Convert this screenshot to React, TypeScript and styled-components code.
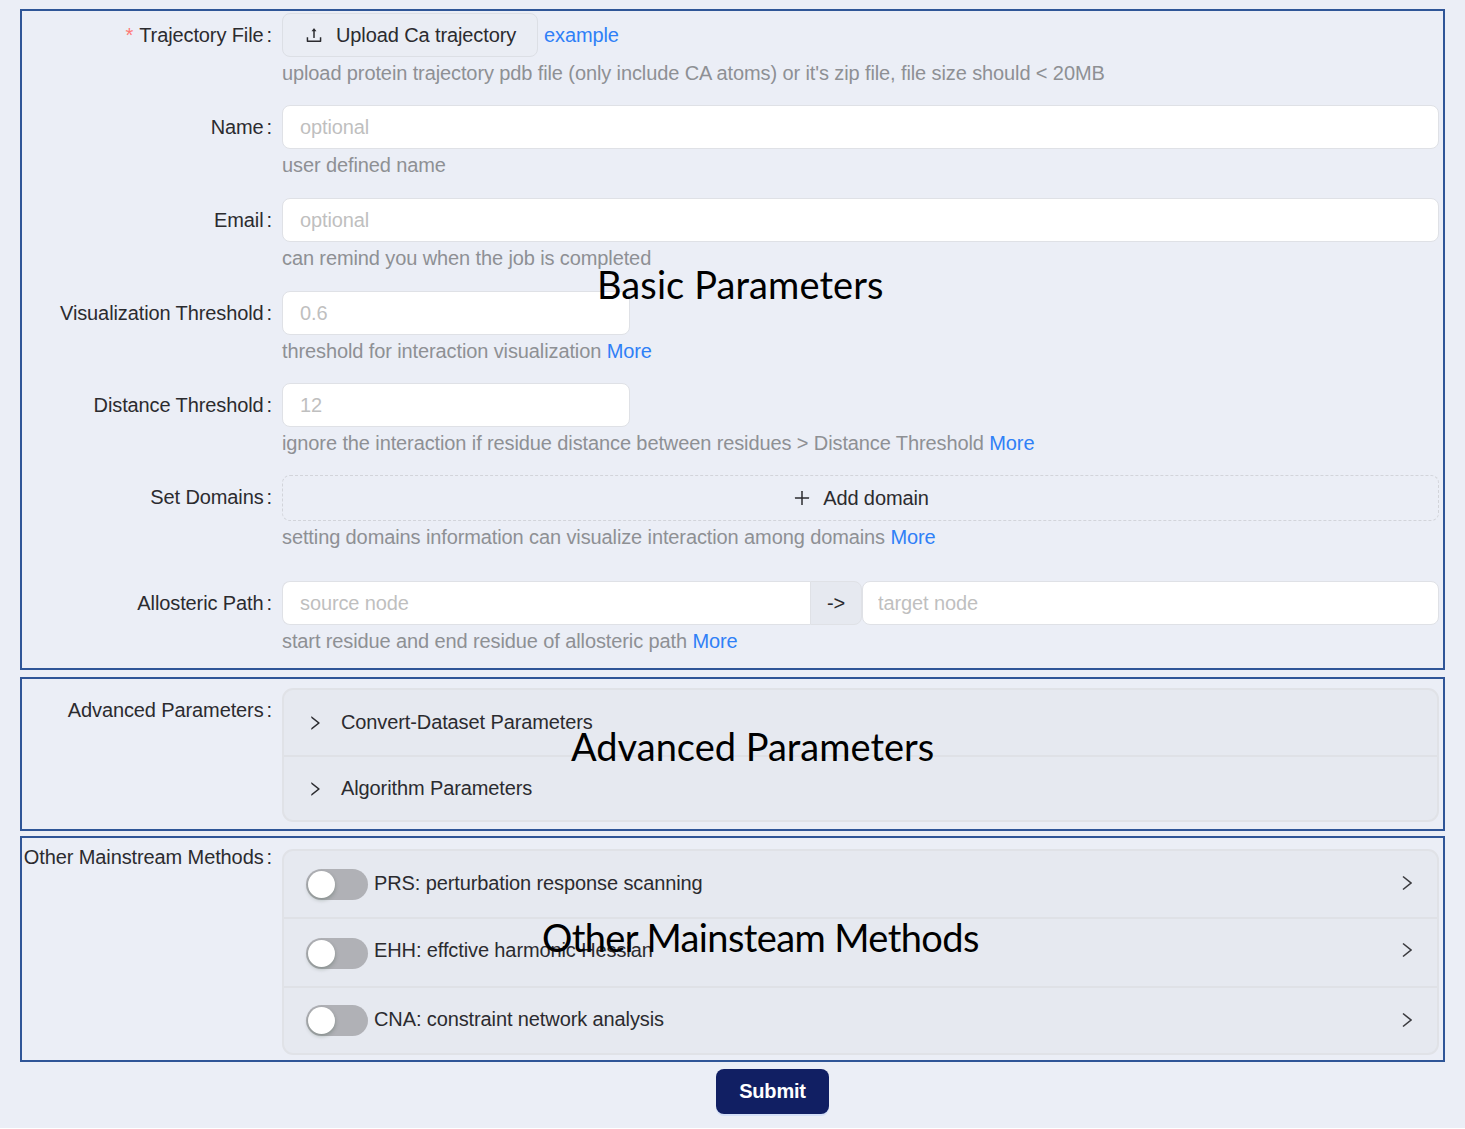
import React from 'react';
import styled, { createGlobalStyle } from 'styled-components';
import { AiOutlinePlus, AiOutlineRight, AiOutlineUpload } from 'react-icons/ai';

const GlobalStyle = createGlobalStyle`
  html, body {
    margin: 0;
    padding: 0;
    background: #ffffff;
  }
  body {
    font-family: "Liberation Sans", Arial, sans-serif;
  }
`;

const METHODS = [
  { name: 'PRS: perturbation response scanning', height: 66, lift: 0, drop: 0 },
  { name: 'EHH: effctive harmonic Hessian', height: 69, lift: 3, drop: 4 },
  { name: 'CNA: constraint network analysis', height: 67, lift: 0, drop: 0 },
];

const PanelArrow = () => (
  <svg width="10" height="16" viewBox="0 0 10 16" fill="none" stroke="#3a3a3e" strokeWidth="1.6">
    <path d="M1 1.5 9 8 1 14.5" />
  </svg>
);

const App = () => (
  <Page>
    <GlobalStyle />
    <Section $height={661}>
      <Row $height={94} $top={2}>
        <Label $required>Trajectory File</Label>
        <Control>
          <UploadLine>
            <UploadButton>
              <AiOutlineUpload size={20} />
              Upload Ca trajectory
            </UploadButton>
            <Link>example</Link>
          </UploadLine>
          <Extra>upload protein trajectory pdb file (only include CA atoms) or it's zip file, file size should &lt; 20MB</Extra>
        </Control>
      </Row>
      <Row $height={93}>
        <Label>Name</Label>
        <Control>
          <Input placeholder="optional" />
          <Extra>user defined name</Extra>
        </Control>
      </Row>
      <Row $height={93}>
        <Label>Email</Label>
        <Control>
          <Input placeholder="optional" />
          <Extra>can remind you when the job is completed</Extra>
        </Control>
      </Row>
      <Row $height={92}>
        <Label>Visualization Threshold</Label>
        <Control>
          <Input $narrow placeholder="0.6" />
          <Extra>threshold for interaction visualization <Link>More</Link></Extra>
        </Control>
      </Row>
      <Row $height={92}>
        <Label>Distance Threshold</Label>
        <Control>
          <Input $narrow placeholder="12" />
          <Extra>ignore the interaction if residue distance between residues &gt; Distance Threshold <Link>More</Link></Extra>
        </Control>
      </Row>
      <Row $height={106}>
        <Label>Set Domains</Label>
        <Control>
          <DashedButton>
            <AiOutlinePlus size={20} />
            Add domain
          </DashedButton>
          <Extra>setting domains information can visualize interaction among domains <Link>More</Link></Extra>
        </Control>
      </Row>
      <Row>
        <Label>Allosteric Path</Label>
        <Control>
          <PathLine>
            <PathInput placeholder="source node" />
            <Addon>-&gt;</Addon>
            <TargetInput placeholder="target node" />
          </PathLine>
          <Extra>start residue and end residue of allosteric path <Link>More</Link></Extra>
        </Control>
      </Row>
      <Caption $left={575} $top={251} $spacing={0.1}>Basic Parameters</Caption>
    </Section>

    <Section $height={154} $gap={7}>
      <Row $top={9}>
        <Label>Advanced Parameters</Label>
        <Collapse>
          <Panel $height={65}>
            <AiOutlineRight size={18} />
            <PanelTitle $indent={17}>Convert-Dataset Parameters</PanelTitle>
          </Panel>
          <Panel $height={65}>
            <AiOutlineRight size={18} />
            <PanelTitle $indent={17}>Algorithm Parameters</PanelTitle>
          </Panel>
        </Collapse>
      </Row>
      <Caption $left={549} $top={45} $spacing={0}>Advanced Parameters</Caption>
    </Section>

    <Section $height={226} $gap={5}>
      <Row $top={11}>
        <Label $height={16}>Other Mainstream Methods</Label>
        <Collapse>
          {METHODS.map(m => (
            <Panel key={m.name} $height={m.height} $lift={m.lift}>
              <Switch $drop={m.drop} />
              <PanelTitle $indent={6} $raised>{m.name}</PanelTitle>
              <Arrow><PanelArrow /></Arrow>
            </Panel>
          ))}
        </Collapse>
      </Row>
      <Caption $left={520} $top={77} $spacing={-0.6}>Other Mainsteam Methods</Caption>
    </Section>

    <Footer>
      <SubmitButton>Submit</SubmitButton>
    </Footer>
  </Page>
);

const Page = styled.div`
  box-sizing: border-box;
  height: 1128px;
  padding: 9px 20px 0;
  background: #ebeef6;
  font-size: 20px;
  letter-spacing: -0.11px;
  color: #2b2b2f;
`;

const Section = styled.section<{ $height: number; $gap?: number }>`
  position: relative;
  box-sizing: border-box;
  height: ${p => p.$height}px;
  margin-top: ${p => p.$gap ?? 0}px;
  padding-right: 4px;
  border: 2px solid #2f5597;
`;

const Row = styled.div<{ $height?: number; $top?: number }>`
  display: grid;
  grid-template-columns: 260px 1fr;
  height: ${p => (p.$height ? `${p.$height}px` : 'auto')};
  padding-top: ${p => p.$top ?? 0}px;
  box-sizing: border-box;
`;

const Label = styled.label<{ $required?: boolean; $height?: number }>`
  height: ${p => p.$height ?? 44}px;
  line-height: ${p => p.$height ?? 44}px;
  padding-right: 10px;
  text-align: right;
  white-space: nowrap;

  &::before {
    content: ${p => (p.$required ? "'*'" : 'none')};
    margin-right: 6px;
    color: #ff7875;
  }

  &::after {
    content: ':';
    margin-left: 3px;
  }
`;

const Control = styled.div`
  min-width: 0;
`;

const UploadLine = styled.div`
  display: flex;
  align-items: center;
  gap: 6px;
  height: 44px;
`;

const UploadButton = styled.div`
  display: flex;
  align-items: center;
  gap: 12px;
  box-sizing: border-box;
  width: 256px;
  height: 44px;
  padding-left: 21px;
  background: #eaedf4;
  border: 1px solid #dcdfe5;
  border-radius: 8px;
  white-space: nowrap;
`;

const Link = styled.span`
  color: #2f80f7;
`;

const Extra = styled.div`
  height: 30px;
  margin-top: 1px;
  line-height: 30px;
  color: #8e9094;
`;

const Input = styled.input<{ $narrow?: boolean }>`
  display: block;
  box-sizing: border-box;
  width: ${p => (p.$narrow ? '348px' : '100%')};
  height: 44px;
  padding: 0 17px;
  background: #ffffff;
  border: 1px solid #dfe1e6;
  border-radius: 8px;
  outline: none;
  font: inherit;
  letter-spacing: inherit;

  &::placeholder {
    color: #bfbfbf;
    opacity: 1;
  }
`;

const DashedButton = styled.div`
  display: flex;
  align-items: center;
  justify-content: center;
  gap: 11px;
  box-sizing: border-box;
  height: 46px;
  border: 1px dashed #d2d4da;
  border-radius: 8px;
`;

const PathLine = styled.div`
  display: flex;
  height: 44px;
`;

const PathInput = styled(Input)`
  width: 528px;
  border-right: 0;
  border-radius: 8px 0 0 8px;
`;

const Addon = styled.div`
  display: flex;
  align-items: center;
  justify-content: center;
  box-sizing: border-box;
  width: 52px;
  background: #e6e9f0;
  border: 1px solid #dfe1e6;
  border-radius: 0 8px 8px 0;
`;

const TargetInput = styled(Input)`
  flex: 1;
  width: auto;
  min-width: 0;
  padding-left: 15px;
`;

const Collapse = styled.div`
  box-sizing: border-box;
  background: #e6e9f0;
  border: 2px solid #e0e2e7;
  border-radius: 11px;
`;

const Panel = styled.div<{ $height: number; $lift?: number }>`
  display: flex;
  align-items: center;
  box-sizing: border-box;
  height: ${p => p.$height}px;
  padding: 0 25px ${p => p.$lift ?? 0}px 22px;

  & + & {
    border-top: 2px solid #dfe1e6;
  }
`;

const PanelTitle = styled.span<{ $indent: number; $raised?: boolean }>`
  margin-left: ${p => p.$indent}px;
  margin-bottom: ${p => (p.$raised ? 2 : 0)}px;
  white-space: nowrap;
`;

const Arrow = styled.span`
  display: flex;
  margin-left: auto;
  margin-bottom: 2px;
`;

const Switch = styled.span<{ $drop: number }>`
  position: relative;
  flex: none;
  width: 62px;
  height: 31px;
  margin-top: ${p => p.$drop}px;
  background: #b0b1b6;
  border-radius: 16px;

  &::after {
    content: '';
    position: absolute;
    top: 2px;
    left: 2px;
    width: 27px;
    height: 27px;
    background: #ffffff;
    border-radius: 50%;
    box-shadow: 0 2px 4px rgba(0, 35, 11, 0.25);
  }
`;

const Caption = styled.div<{ $left: number; $top: number; $spacing: number }>`
  position: absolute;
  left: ${p => p.$left}px;
  top: ${p => p.$top}px;
  font-family: Lato, "DejaVu Sans", sans-serif;
  font-size: 38px;
  line-height: 44px;
  letter-spacing: ${p => p.$spacing}px;
  white-space: nowrap;
  color: #000000;
`;

const Footer = styled.div`
  display: flex;
  justify-content: center;
  padding: 7px 0 0 80px;
`;

const SubmitButton = styled.button`
  box-sizing: border-box;
  width: 113px;
  height: 45px;
  background: #111f63;
  border: 0;
  border-radius: 8px;
  box-shadow: 0 2px 0 rgba(5, 95, 255, 0.1);
  color: #ffffff;
  font: inherit;
  font-weight: 700;
  letter-spacing: -0.2px;
`;

export default App;
